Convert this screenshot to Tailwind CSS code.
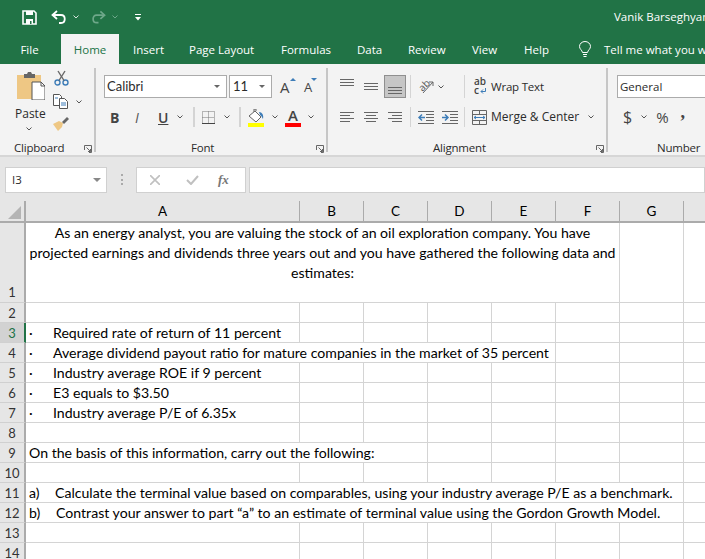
<!DOCTYPE html>
<html lang="en">
<head>
<meta charset="UTF-8">
<title>Excel</title>
<script src="https://cdn.jsdelivr.net/npm/@tailwindcss/browser@4"></script>
</head>
<body class="w-[705px] h-[559px] overflow-hidden bg-white font-['Open_Sans',sans-serif] text-[12px] text-[#2b2b2b]">

<!-- title bar -->
<div class="h-[34px] bg-[#217346] flex items-center text-white pl-[22px] overflow-hidden">
  <svg class="shrink-0" width="15" height="15" viewBox="0 0 15 15"><path d="M1 1h11l2 2v11H1z" fill="none" stroke="#fff" stroke-width="1.6"/><path d="M4 1h7v4H4z" fill="#fff"/><path d="M4 9h7v5H4z" fill="#fff"/><rect x="8" y="11" width="1.5" height="3" fill="#217346"/></svg>
  <svg class="ml-[14px] shrink-0" width="16" height="14" viewBox="0 0 16 14" fill="none" stroke="#fff" stroke-width="1.8"><path d="M6 1 1.500 5 6 9"/><path d="M2 5h8c5 0 5 8 0 8H8"/></svg>
  <svg class="ml-[6px] shrink-0" width="6" height="4" viewBox="0 0 6 4" fill="none" stroke="#d8e6de"><path d="M.5.5 3 3 5.500.5"/></svg>
  <svg class="ml-[12px] shrink-0" width="15" height="14" viewBox="0 0 16 14" fill="none" stroke="#6ea88a" stroke-width="1.8"><path d="M10 1l4.500 4L10 9"/><path d="M14 5H6C1 5 1 13 6 13h2"/></svg>
  <svg class="ml-[6px] shrink-0" width="6" height="4" viewBox="0 0 6 4" fill="none" stroke="#6ea88a"><path d="M.5.5 3 3 5.500.5"/></svg>
  <svg class="ml-[17px] shrink-0" width="6" height="7" viewBox="0 0 6 7" fill="#fff"><rect width="6" height="1"/><path d="M0 3h6L3 6.500z"/></svg>
  <span class="ml-[473px] shrink-0 whitespace-nowrap text-[11.5px]">Vanik Barseghyan</span>
</div>

<!-- tabs -->
<div class="h-[30px] bg-[#217346] flex text-white whitespace-nowrap overflow-hidden text-[11.5px]">
  <span class="shrink-0 w-[59px] pt-[7px] text-center">File</span>
  <span class="shrink-0 ml-[2px] w-[58px] bg-[#f3f3f3] text-[#217346] pt-[7px] text-center">Home</span>
  <span class="shrink-0 ml-[14px] w-[29px] pt-[7px] text-center">Insert</span>
  <span class="shrink-0 ml-[27px] w-[65px] pt-[7px] text-center">Page Layout</span>
  <span class="shrink-0 ml-[27px] w-[49px] pt-[7px] text-center">Formulas</span>
  <span class="shrink-0 ml-[27px] w-[24px] pt-[7px] text-center">Data</span>
  <span class="shrink-0 ml-[27px] w-[37px] pt-[7px] text-center">Review</span>
  <span class="shrink-0 ml-[27px] w-[25px] pt-[7px] text-center">View</span>
  <span class="shrink-0 ml-[27px] w-[25px] pt-[7px] text-center">Help</span>
  <svg class="shrink-0 ml-[30px] mt-[7px]" width="12" height="17" viewBox="0 0 12 17" fill="none" stroke="#fff"><path d="M3.500 11.500C3 9 .5 8 .5 5.500a5.500 5 0 0 1 11 0c0 2.500-2.500 3.500-3 6z"/><path d="M4 13.500h4M4.500 15.500h3"/></svg>
  <span class="shrink-0 ml-[13px] pt-[7px]">Tell me what you want to do</span>
</div>

<!-- ribbon -->
<div class="h-[93px] bg-[#f3f3f3] border-b-2 border-[#d6d6d6] flex pt-[4px] overflow-hidden">

  <!-- clipboard -->
  <div class="w-[96px] shrink-0 h-[84px] border-r-2 border-[#c6c6c6] relative">
    <div class="flex h-[69px]">
      <div class="w-[53px] pl-[17px] pt-[3px] flex flex-col">
        <svg class="shrink-0" width="28" height="29" viewBox="0 0 28 29"><path d="M0 4h24v24H0z" fill="#eec784" /><path d="M7 3h3l1-2h3l1 2h3v4H7z" fill="#666"/><path d="M15 11h9l4 4v14H15z" fill="#fff" stroke="#555"/><path d="M24 11v4h4" fill="none" stroke="#555"/></svg>
        <span class="mt-[6px] ml-[-2px] text-[12px] leading-[16px]">Paste</span>
        <svg class="ml-[9px] mt-[5px] shrink-0" width="6" height="4" viewBox="0 0 6 4" fill="none" stroke="#555"><path d="M.5.5 3 3 5.500.5"/></svg>
      </div>
      <div class="pt-[2px]">
        <svg class="ml-[1px]" width="15" height="16" viewBox="0 0 15 16" fill="none" stroke="#3e7db8" stroke-width="1.4"><circle cx="3.500" cy="12.500" r="2.500"/><circle cx="11.500" cy="12.500" r="2.500"/><path d="M5 10.500 11 1" stroke="#666"/><path d="M10 10.500 4 1" stroke="#666"/></svg>
        <div class="flex items-center mt-[8px]">
          <svg width="15" height="15" viewBox="0 0 15 15" fill="#fff" stroke="#555"><path d="M.5.5h6l2 2v9h-8z"/><path d="M6.500 4.500h5l3 3v7h-8z"/><path d="M8 9h5M8 11h5M2 4h3" stroke="#3e7db8"/></svg>
          <svg class="ml-[8px]" width="6" height="4" viewBox="0 0 6 4" fill="none" stroke="#555"><path d="M.5.5 3 3 5.500.5"/></svg>
        </div>
        <svg class="mt-[8px]" width="16" height="14" viewBox="0 0 16 14"><path d="M0 7l5 7 4-4 1-4-4-2z" fill="#eec784"/><path d="M9 5l5-5 2 2-5 5z" fill="#666"/></svg>
      </div>
    </div>
    <span class="absolute left-[14px] top-[72px] leading-[16px] text-[11.5px] tracking-[-0.2px]">Clipboard</span>
    <svg class="absolute left-[84px] top-[77px]" width="8" height="8" viewBox="0 0 8 8" fill="none" stroke="#666"><path d="M.5 5V.500H7.500V7.500H5M2.500 2.500 6.500 6.500M4 6.500h2.500V4"/></svg>
  </div>

  <!-- font -->
  <div class="w-[232px] shrink-0 h-[84px] border-r-2 border-[#c6c6c6] relative pl-[8px] pt-[7px]">
    <div class="flex items-center h-[23px]">
      <div class="w-[123px] h-[23px] bg-white border border-[#ababab] flex items-center justify-between pl-[2px] pr-[6px]"><span class="font-['Lato',sans-serif] text-[13px]">Calibri</span><svg width="6" height="3" viewBox="0 0 6 3" fill="#666"><path d="M0 0h6L3 3z"/></svg></div>
      <div class="w-[43px] h-[23px] ml-[2px] bg-white border border-[#ababab] flex items-center justify-between pl-[3px] pr-[6px]"><span class="font-['Lato',sans-serif] text-[13px]">11</span><svg width="6" height="3" viewBox="0 0 6 3" fill="#666"><path d="M0 0h6L3 3z"/></svg></div>
      <span class="ml-[8px] relative text-[15px] leading-[18px] w-[15px] text-[#444]">A<svg class="absolute left-[10px] top-[0px]" width="6" height="3" viewBox="0 0 6 3" fill="#3e7db8"><path d="M0 3h6L3 0z"/></svg></span>
      <span class="ml-[9px] relative text-[13px] leading-[18px] mt-[1px] text-[#444]">A<svg class="absolute left-[7px] top-[0px]" width="6" height="3" viewBox="0 0 6 3" fill="#3e7db8"><path d="M0 0h6L3 3z"/></svg></span>
    </div>
    <div class="flex items-center h-[20px] mt-[9px]">
      <span class="ml-[6px] w-[12px] font-bold text-[14px] text-[#444]">B</span>
      <span class="ml-[13px] w-[11px] italic text-[14px] text-[#555]">I</span>
      <span class="ml-[12px] w-[12px] text-[14px] font-semibold underline text-[#444]">U</span>
      <svg class="ml-[7px]" width="6" height="4" viewBox="0 0 6 4" fill="none" stroke="#555"><path d="M.5.5 3 3 5.500.5"/></svg>
      <div class="ml-[10px] h-[20px] w-[2px] bg-[#d4d4d4]"></div>
      <svg class="ml-[7px]" width="13" height="13" viewBox="0 0 13 13" fill="none" stroke="#777" stroke-dasharray="1 1"><path d="M.5.500h12v12H.5zM6.500.500v12M.5 6.500h12"/><path d="M0 12.500h13" stroke="#444" stroke-dasharray="none"/></svg>
      <svg class="ml-[9px]" width="6" height="4" viewBox="0 0 6 4" fill="none" stroke="#555"><path d="M.5.5 3 3 5.500.5"/></svg>
      <div class="ml-[9px] h-[20px] w-[2px] bg-[#d4d4d4]"></div>
      <div class="ml-[7px] w-[16px] h-[20px] flex flex-col justify-end">
        <svg width="16" height="14" viewBox="0 0 16 14"><path d="M1 7l6-5 6 6-5 5z" fill="#fff" stroke="#666"/><path d="M6 3V0h2v2" fill="none" stroke="#666"/><path d="M11 3c3 0 5 3 4 7-1-1-1-3-3-4z" fill="#3e7db8"/></svg>
        <div class="h-[4px] bg-[#ffff00]"></div>
      </div>
      <svg class="ml-[8px]" width="6" height="4" viewBox="0 0 6 4" fill="none" stroke="#555"><path d="M.5.5 3 3 5.500.5"/></svg>
      <div class="ml-[7px] w-[16px] h-[20px] flex flex-col items-center justify-end">
        <span class="text-[15px] leading-[16px] text-[#444] font-semibold">A</span>
        <div class="h-[4px] w-[16px] bg-[#ff0000]"></div>
      </div>
      <svg class="ml-[7px]" width="6" height="4" viewBox="0 0 6 4" fill="none" stroke="#555"><path d="M.5.5 3 3 5.500.5"/></svg>
    </div>
    <span class="absolute left-[95px] top-[72px] leading-[16px] text-[11.5px] tracking-[-0.2px]">Font</span>
    <svg class="absolute left-[220px] top-[77px]" width="8" height="8" viewBox="0 0 8 8" fill="none" stroke="#666"><path d="M.5 5V.500H7.500V7.500H5M2.500 2.500 6.500 6.500M4 6.500h2.500V4"/></svg>
  </div>

  <!-- alignment -->
  <div class="w-[280px] shrink-0 h-[84px] border-r-2 border-[#c6c6c6] relative pt-[7px]">
    <div class="flex items-center h-[23px] pl-[12px]">
      <svg width="14" height="23" viewBox="0 0 14 23" fill="none" stroke="#666"><path d="M0 4.500h14M0 7.500h14M0 10.500h14"/></svg>
      <svg class="ml-[10px]" width="14" height="23" viewBox="0 0 14 23" fill="none" stroke="#666"><path d="M0 8.500h14M0 11.500h14M0 14.500h14"/></svg>
      <div class="ml-[6px] w-[22px] h-[23px] bg-[#c6c6c6] border border-[#8f8f8f] flex items-end justify-center pb-[3px]"><svg width="14" height="8" viewBox="0 0 14 8" fill="none" stroke="#666"><path d="M0 1.500h14M0 4.500h14M0 7.500h14"/></svg></div>
      <div class="ml-[4px] h-[23px] w-[1px] bg-[#d4d4d4]"></div>
      <div class="ml-[7px] w-[16px] h-[16px] relative">
        <span class="absolute left-[0px] top-[0px] text-[10px] leading-[12px] -rotate-45 text-[#555]">ab</span>
        <svg class="absolute left-[0px] top-[0px]" width="16" height="16" viewBox="0 0 16 16" fill="none" stroke="#666"><path d="M5 14 15 3M15 3h-4M15 3v4"/></svg>
      </div>
      <svg class="ml-[4px]" width="6" height="4" viewBox="0 0 6 4" fill="none" stroke="#555"><path d="M.5.5 3 3 5.500.5"/></svg>
      <div class="ml-[20px] h-[23px] w-[1px] bg-[#d4d4d4]"></div>
      <div class="ml-[9px] w-[13px] h-[15px] relative">
        <span class="absolute left-[0px] top-[-2px] text-[10px] leading-[9px] font-semibold text-[#444]">ab<br>c</span>
        <svg class="absolute left-[6px] top-[9px]" width="7" height="6" viewBox="0 0 7 6" fill="none" stroke="#3e7db8"><path d="M5.500 0v3.500H1M3 1.500 1 3.500l2 2"/></svg>
      </div>
      <span class="ml-[4px] text-[11.5px] tracking-[-0.2px]">Wrap Text</span>
    </div>
    <div class="flex items-center h-[20px] mt-[9px] pl-[12px]">
      <svg width="14" height="12" viewBox="0 0 14 12" fill="none" stroke="#666"><path d="M0 1.500h14M0 4.500h10M0 7.500h14M0 10.500h10"/></svg>
      <svg class="ml-[10px]" width="14" height="12" viewBox="0 0 14 12" fill="none" stroke="#666"><path d="M0 1.500h14M2 4.500h10M0 7.500h14M2 10.500h10"/></svg>
      <svg class="ml-[10px]" width="14" height="12" viewBox="0 0 14 12" fill="none" stroke="#666"><path d="M0 1.500h14M4 4.500h10M0 7.500h14M4 10.500h10"/></svg>
      <div class="ml-[8px] h-[20px] w-[1px] bg-[#d4d4d4]"></div>
      <svg class="ml-[7px]" width="16" height="13" viewBox="0 0 16 13" fill="none" stroke="#666"><path d="M0 .5h16M8 3.500h8M8 6.500h8M8 9.500h8M0 12.500h16"/><path d="M7 6.500H1M4 3.500l-3 3 3 3" stroke="#3e7db8" stroke-width="1.500"/></svg>
      <svg class="ml-[8px]" width="16" height="13" viewBox="0 0 16 13" fill="none" stroke="#666"><path d="M0 .5h16M8 3.500h8M8 6.500h8M8 9.500h8M0 12.500h16"/><path d="M0 6.500h6M3 3.500l3 3-3 3" stroke="#3e7db8" stroke-width="1.500"/></svg>
      <div class="ml-[6px] h-[20px] w-[1px] bg-[#d4d4d4]"></div>
      <svg class="ml-[7px]" width="15" height="15" viewBox="0 0 15 15" fill="none" stroke="#666"><path d="M.5.500h14v14H.5zM.5 4.500h14M.5 10.500h14M7.500.500v4M7.500 10.500v4"/><path d="M2 7.500h11M4 6l-2 1.500L4 9M11 6l2 1.500L11 9" stroke="#3e7db8"/></svg>
      <span class="ml-[4px] whitespace-nowrap">Merge &amp; Center</span>
      <svg class="ml-[9px]" width="6" height="4" viewBox="0 0 6 4" fill="none" stroke="#555"><path d="M.5.5 3 3 5.500.5"/></svg>
    </div>
    <span class="absolute left-[105px] top-[72px] leading-[16px] text-[11.5px] tracking-[-0.2px]">Alignment</span>
    <svg class="absolute left-[268px] top-[77px]" width="8" height="8" viewBox="0 0 8 8" fill="none" stroke="#666"><path d="M.5 5V.500H7.500V7.500H5M2.500 2.500 6.500 6.500M4 6.500h2.500V4"/></svg>
  </div>

  <!-- number -->
  <div class="flex-1 h-[84px] relative pl-[9px] pt-[7px]">
    <div class="w-[120px] h-[23px] bg-white border border-[#ababab] pl-[2px] flex items-center text-[11.5px]">General</div>
    <div class="flex items-center h-[20px] mt-[9px] pl-[6px] text-[#444]">
      <span class="text-[16px]">$</span>
      <svg class="ml-[9px]" width="6" height="4" viewBox="0 0 6 4" fill="none" stroke="#555"><path d="M.5.5 3 3 5.500.5"/></svg>
      <span class="ml-[9px] text-[15px]">%</span>
      <span class="ml-[12px] font-['Liberation_Serif',serif] text-[18px] font-bold leading-[20px] mb-[10px]">,</span>
    </div>
    <span class="absolute left-[49px] top-[72px] leading-[16px] text-[11.5px] tracking-[-0.2px]">Number</span>
  </div>
</div>

<!-- formula bar -->
<div class="h-[44px] bg-[#e6e6e6] flex items-start pt-[10px] pl-[5px]">
  <div class="w-[102px] h-[26px] bg-white border border-[#d0d0d0] flex items-center justify-between pl-[6px] pr-[5px] text-[11.5px]"><span>I3</span><svg width="8" height="4" viewBox="0 0 8 4" fill="#888"><path d="M0 0h8L4 4z"/></svg></div>
  <div class="ml-[14px] mt-[7px] w-[2px] h-[11px] border-l-2 border-dotted border-[#aaa]"></div>
  <div class="ml-[13px] w-[110px] h-[26px] bg-white border border-[#d0d0d0] flex items-center">
    <svg class="ml-[13px]" width="10" height="10" viewBox="0 0 10 10" fill="none" stroke="#c0c0c0" stroke-width="1.600"><path d="M0 0l10 10M10 0 0 10"/></svg>
    <svg class="ml-[26px]" width="13" height="10" viewBox="0 0 13 10" fill="none" stroke="#c0c0c0" stroke-width="2"><path d="M1 5l4 4 7-8"/></svg>
    <span class="ml-[19px] font-['Liberation_Serif',serif] italic font-bold text-[13px] text-[#777]">fx</span>
  </div>
  <div class="ml-[3px] flex-1 h-[26px] bg-white border border-[#d0d0d0]"></div>
</div>

<!-- sheet -->
<div class="grid grid-cols-[26px_274px_64px_64px_64px_64px_64px_64px_21px] grid-rows-[22px] auto-rows-[20px] font-['Lato',sans-serif] text-[14.12px] leading-[20px] text-black whitespace-nowrap">
  <!-- column header -->
  <div class="bg-[#e6e6e6] border-r-2 border-b-2 border-[#ababab] flex items-end justify-end pr-[3px] pb-[2px]"><svg width="13" height="13" viewBox="0 0 13 13" fill="#b4b4b4"><path d="M13 0v13H0z"/></svg></div>
  <div class="bg-[#e6e6e6] border-r border-b-2 border-[#ababab] text-center text-[13.5px]">A</div>
  <div class="bg-[#e6e6e6] border-r border-b-2 border-[#ababab] text-center text-[13.5px]">B</div>
  <div class="bg-[#e6e6e6] border-r border-b-2 border-[#ababab] text-center text-[13.5px]">C</div>
  <div class="bg-[#e6e6e6] border-r border-b-2 border-[#ababab] text-center text-[13.5px]">D</div>
  <div class="bg-[#e6e6e6] border-r border-b-2 border-[#ababab] text-center text-[13.5px]">E</div>
  <div class="bg-[#e6e6e6] border-r border-b-2 border-[#ababab] text-center text-[13.5px]">F</div>
  <div class="bg-[#e6e6e6] border-r border-b-2 border-[#ababab] text-center text-[13.5px]">G</div>
  <div class="bg-[#e6e6e6] border-b-2 border-[#ababab]"></div>

  <!-- row 1 -->
  <div class="row-span-4 bg-[#e6e6e6] border-r-2 border-b border-[#ababab] border-b-[#d0d0d0] flex items-end justify-center text-[13px] text-[#333]">1</div>
  <div class="col-span-6 row-span-4 border-r border-b border-[#d4d4d4] text-center leading-[20px] whitespace-normal px-[2px]">As an energy analyst, you are valuing the stock of an oil exploration company. You have projected earnings and dividends three years out and you have gathered the following data and estimates:</div>
  <div class="row-span-4 border-r border-b border-[#d4d4d4]"></div>
  <div class="row-span-4 border-b border-[#d4d4d4]"></div>

  <!-- row 2 -->
  <div class="bg-[#e6e6e6] border-r-2 border-b border-[#ababab] border-b-[#d0d0d0] text-center text-[13px] text-[#333]">2</div>
  <div class="border-r border-b border-[#d4d4d4]"></div><div class="border-r border-b border-[#d4d4d4]"></div><div class="border-r border-b border-[#d4d4d4]"></div><div class="border-r border-b border-[#d4d4d4]"></div><div class="border-r border-b border-[#d4d4d4]"></div><div class="border-r border-b border-[#d4d4d4]"></div><div class="border-r border-b border-[#d4d4d4]"></div><div class="border-b border-[#d4d4d4]"></div>

  <!-- row 3 -->
  <div class="bg-[#d2d2d2] border-r-2 border-b border-r-[#217346] border-b-[#d0d0d0] text-center text-[13px] text-[#217346]">3</div>
  <div class="border-r border-b border-[#d4d4d4] pl-[3px] flex"><span class="w-[24px]">·</span>Required rate of return of 11 percent</div>
  <div class="border-r border-b border-[#d4d4d4]"></div><div class="border-r border-b border-[#d4d4d4]"></div><div class="border-r border-b border-[#d4d4d4]"></div><div class="border-r border-b border-[#d4d4d4]"></div><div class="border-r border-b border-[#d4d4d4]"></div><div class="border-r border-b border-[#d4d4d4]"></div><div class="border-b border-[#d4d4d4]"></div>

  <!-- row 4 -->
  <div class="bg-[#e6e6e6] border-r-2 border-b border-[#ababab] border-b-[#d0d0d0] text-center text-[13px] text-[#333]">4</div>
  <div class="col-span-5 border-r border-b border-[#d4d4d4] pl-[3px] flex"><span class="w-[24px]">·</span>Average dividend payout ratio for mature companies in the market of 35 percent</div>
  <div class="border-r border-b border-[#d4d4d4]"></div><div class="border-r border-b border-[#d4d4d4]"></div><div class="border-b border-[#d4d4d4]"></div>

  <!-- row 5 -->
  <div class="bg-[#e6e6e6] border-r-2 border-b border-[#ababab] border-b-[#d0d0d0] text-center text-[13px] text-[#333]">5</div>
  <div class="border-r border-b border-[#d4d4d4] pl-[3px] flex"><span class="w-[24px]">·</span>Industry average ROE if 9 percent</div>
  <div class="border-r border-b border-[#d4d4d4]"></div><div class="border-r border-b border-[#d4d4d4]"></div><div class="border-r border-b border-[#d4d4d4]"></div><div class="border-r border-b border-[#d4d4d4]"></div><div class="border-r border-b border-[#d4d4d4]"></div><div class="border-r border-b border-[#d4d4d4]"></div><div class="border-b border-[#d4d4d4]"></div>

  <!-- row 6 -->
  <div class="bg-[#e6e6e6] border-r-2 border-b border-[#ababab] border-b-[#d0d0d0] text-center text-[13px] text-[#333]">6</div>
  <div class="border-r border-b border-[#d4d4d4] pl-[3px] flex"><span class="w-[24px]">·</span>E3 equals to $3.50</div>
  <div class="border-r border-b border-[#d4d4d4]"></div><div class="border-r border-b border-[#d4d4d4]"></div><div class="border-r border-b border-[#d4d4d4]"></div><div class="border-r border-b border-[#d4d4d4]"></div><div class="border-r border-b border-[#d4d4d4]"></div><div class="border-r border-b border-[#d4d4d4]"></div><div class="border-b border-[#d4d4d4]"></div>

  <!-- row 7 -->
  <div class="bg-[#e6e6e6] border-r-2 border-b border-[#ababab] border-b-[#d0d0d0] text-center text-[13px] text-[#333]">7</div>
  <div class="border-r border-b border-[#d4d4d4] pl-[3px] flex"><span class="w-[24px]">·</span>Industry average P/E of 6.35x</div>
  <div class="border-r border-b border-[#d4d4d4]"></div><div class="border-r border-b border-[#d4d4d4]"></div><div class="border-r border-b border-[#d4d4d4]"></div><div class="border-r border-b border-[#d4d4d4]"></div><div class="border-r border-b border-[#d4d4d4]"></div><div class="border-r border-b border-[#d4d4d4]"></div><div class="border-b border-[#d4d4d4]"></div>

  <!-- row 8 -->
  <div class="bg-[#e6e6e6] border-r-2 border-b border-[#ababab] border-b-[#d0d0d0] text-center text-[13px] text-[#333]">8</div>
  <div class="border-r border-b border-[#d4d4d4]"></div><div class="border-r border-b border-[#d4d4d4]"></div><div class="border-r border-b border-[#d4d4d4]"></div><div class="border-r border-b border-[#d4d4d4]"></div><div class="border-r border-b border-[#d4d4d4]"></div><div class="border-r border-b border-[#d4d4d4]"></div><div class="border-r border-b border-[#d4d4d4]"></div><div class="border-b border-[#d4d4d4]"></div>

  <!-- row 9 -->
  <div class="bg-[#e6e6e6] border-r-2 border-b border-[#ababab] border-b-[#d0d0d0] text-center text-[13px] text-[#333]">9</div>
  <div class="col-span-3 border-r border-b border-[#d4d4d4] pl-[3px]">On the basis of this information, carry out the following:</div>
  <div class="border-r border-b border-[#d4d4d4]"></div><div class="border-r border-b border-[#d4d4d4]"></div><div class="border-r border-b border-[#d4d4d4]"></div><div class="border-r border-b border-[#d4d4d4]"></div><div class="border-b border-[#d4d4d4]"></div>

  <!-- row 10 -->
  <div class="bg-[#e6e6e6] border-r-2 border-b border-[#ababab] border-b-[#d0d0d0] text-center text-[13px] text-[#333]">10</div>
  <div class="border-r border-b border-[#d4d4d4]"></div><div class="border-r border-b border-[#d4d4d4]"></div><div class="border-r border-b border-[#d4d4d4]"></div><div class="border-r border-b border-[#d4d4d4]"></div><div class="border-r border-b border-[#d4d4d4]"></div><div class="border-r border-b border-[#d4d4d4]"></div><div class="border-r border-b border-[#d4d4d4]"></div><div class="border-b border-[#d4d4d4]"></div>

  <!-- row 11 -->
  <div class="bg-[#e6e6e6] border-r-2 border-b border-[#ababab] border-b-[#d0d0d0] text-center text-[13px] text-[#333]">11</div>
  <div class="col-span-7 border-r border-b border-[#d4d4d4] pl-[3px] flex"><span class="w-[26px]">a)</span>Calculate the terminal value based on comparables, using your industry average P/E as a benchmark.</div>
  <div class="border-b border-[#d4d4d4]"></div>

  <!-- row 12 -->
  <div class="bg-[#e6e6e6] border-r-2 border-b border-[#ababab] border-b-[#d0d0d0] text-center text-[13px] text-[#333]">12</div>
  <div class="col-span-7 border-r border-b border-[#d4d4d4] pl-[3px] flex"><span class="w-[27px]">b)</span>Contrast your answer to part “a” to an estimate of terminal value using the Gordon Growth Model.</div>
  <div class="border-b border-[#d4d4d4]"></div>

  <!-- row 13 -->
  <div class="bg-[#e6e6e6] border-r-2 border-b border-[#ababab] border-b-[#d0d0d0] text-center text-[13px] text-[#333]">13</div>
  <div class="border-r border-b border-[#d4d4d4]"></div><div class="border-r border-b border-[#d4d4d4]"></div><div class="border-r border-b border-[#d4d4d4]"></div><div class="border-r border-b border-[#d4d4d4]"></div><div class="border-r border-b border-[#d4d4d4]"></div><div class="border-r border-b border-[#d4d4d4]"></div><div class="border-r border-b border-[#d4d4d4]"></div><div class="border-b border-[#d4d4d4]"></div>

  <!-- row 14 -->
  <div class="bg-[#e6e6e6] border-r-2 border-b border-[#ababab] border-b-[#d0d0d0] text-center text-[13px] text-[#333]">14</div>
  <div class="border-r border-b border-[#d4d4d4]"></div><div class="border-r border-b border-[#d4d4d4]"></div><div class="border-r border-b border-[#d4d4d4]"></div><div class="border-r border-b border-[#d4d4d4]"></div><div class="border-r border-b border-[#d4d4d4]"></div><div class="border-r border-b border-[#d4d4d4]"></div><div class="border-r border-b border-[#d4d4d4]"></div><div class="border-b border-[#d4d4d4]"></div>
</div>
</body>
</html>
